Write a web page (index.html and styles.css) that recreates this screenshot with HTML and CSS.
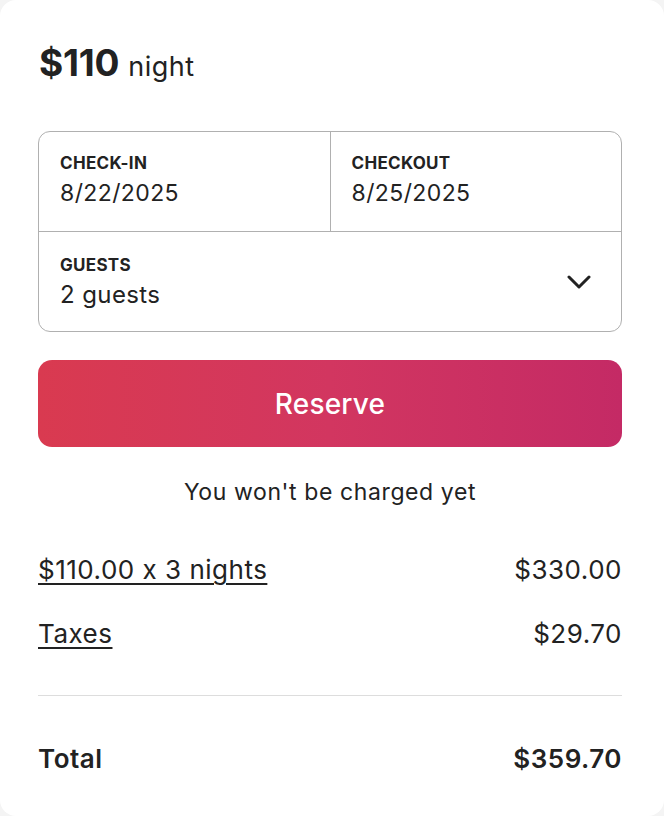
FILE: index.html
```html
<!DOCTYPE html>
<html lang="en">
<head>
    <meta charset="UTF-8">
    <meta name="viewport" content="width=device-width, initial-scale=1.0">
    <title>Reserve</title>
    <link rel="stylesheet" href="styles.css">
</head>
<body>
    <div class="card">
        <!-- Nightly price -->
        <div class="price">
            <span class="amount">$110</span>
            <span class="per">night</span>
        </div>

        <!-- Dates and guests picker -->
        <div class="picker">
            <div class="dates">
                <div class="field">
                    <div class="label">CHECK-IN</div>
                    <div class="value">8/22/2025</div>
                </div>
                <div class="field field-right">
                    <div class="label">CHECKOUT</div>
                    <div class="value">8/25/2025</div>
                </div>
            </div>
            <div class="field guests">
                <div>
                    <div class="label">GUESTS</div>
                    <div class="value">2 guests</div>
                </div>
                <svg class="chevron" viewBox="0 0 24 16" width="24" height="16">
                    <path d="M2 3 L12 13 L22 3" fill="none" stroke="#222" stroke-width="3" stroke-linecap="round" stroke-linejoin="round"/>
                </svg>
            </div>
        </div>

        <button class="reserve">Reserve</button>
        <div class="note">You won't be charged yet</div>

        <!-- Price breakdown -->
        <div class="line">
            <span class="link">$110.00 x 3 nights</span>
            <span>$330.00</span>
        </div>
        <div class="line">
            <span class="link">Taxes</span>
            <span>$29.70</span>
        </div>

        <div class="total">
            <span>Total</span>
            <span>$359.70</span>
        </div>
    </div>
</body>
</html>
```

FILE: styles.css
```css
html, body {
    margin: 0;
    height: 100%;
}

body {
    background-color: #f4f4f4;
    font-family: Inter, "Noto Sans", sans-serif;
    font-feature-settings: "calt" 0;
    color: #222;
}

.card {
    box-sizing: border-box;
    width: 664px;
    height: 816px;
    background-color: #fff;
    border-radius: 16px;
    padding: 40px 42px 0 38px;
}

/* Price header */
.price {
    display: flex;
    align-items: baseline;
    gap: 9px;
    height: 52px;
    margin-left: 1px;
}

.amount {
    font-size: 37px;
    font-weight: 700;
    letter-spacing: -0.2px;
}

.per {
    font-size: 27px;
    letter-spacing: 0.5px;
}

/* Picker box */
.picker {
    margin-top: 39px;
    border: 1px solid #b0b0b0;
    border-radius: 12px;
}

.dates {
    display: flex;
    border-bottom: 1px solid #b0b0b0;
}

.field {
    flex: 1;
    height: 99px;
    box-sizing: border-box;
    padding: 21px 21px 0;
}

.field-right {
    border-left: 1px solid #b0b0b0;
}

.label {
    font-size: 17px;
    font-weight: 700;
    letter-spacing: 0.3px;
}

.value {
    font-size: 23px;
    letter-spacing: 0.4px;
    margin-top: 6px;
}

.guests {
    display: flex;
    justify-content: space-between;
    align-items: center;
    padding: 0 30px 0 21px;
}

.guests .value {
    font-size: 24px;
    margin-top: 5px;
}

.chevron {
    display: block;
}

/* Reserve button */
.reserve {
    display: block;
    width: 100%;
    height: 87px;
    margin-top: 28px;
    border: none;
    border-radius: 14px;
    background: linear-gradient(90deg, #d93a50 0%, #d23660 50%, #c42a65 100%);
    color: #fff;
    font-family: inherit;
    font-size: 28px;
    font-weight: 500;
    letter-spacing: 0.2px;
    cursor: pointer;
}

.note {
    text-align: center;
    font-size: 23px;
    letter-spacing: 0.6px;
    margin-top: 31px;
}

/* Breakdown rows */
.line {
    display: flex;
    justify-content: space-between;
    font-size: 26px;
    letter-spacing: 0.5px;
    margin-top: 48px;
}

.line + .line {
    margin-top: 33px;
}

.link {
    text-decoration: underline;
    text-underline-offset: 4px;
    text-decoration-thickness: 1.5px;
}

.total {
    display: flex;
    justify-content: space-between;
    font-size: 26px;
    font-weight: 600;
    letter-spacing: 0.5px;
    border-top: 1px solid #ddd;
    margin-top: 46px;
    padding-top: 47px;
}
```
